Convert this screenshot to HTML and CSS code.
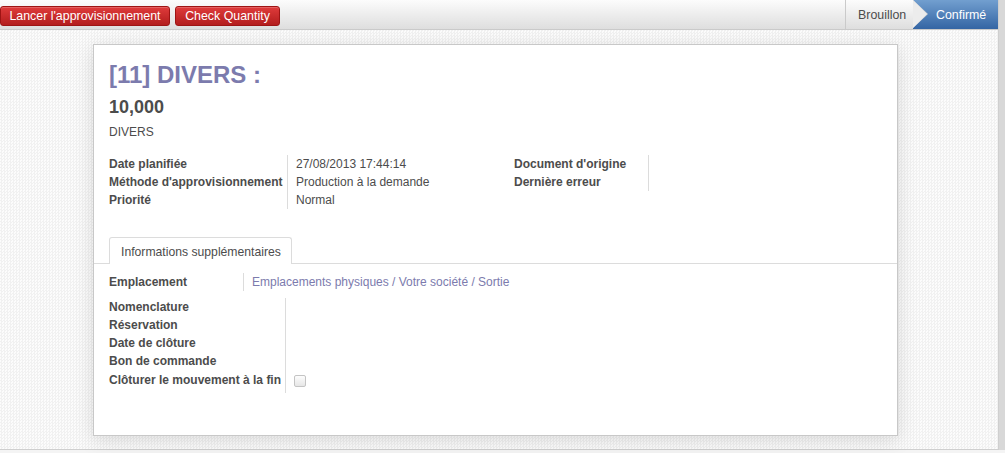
FILE: index.html
```html
<!DOCTYPE html>
<html lang="fr">
<head>
<meta charset="utf-8">
<title>Approvisionnement</title>
<link rel="stylesheet" href="styles.css">
</head>
<body>
<div class="app">
  <div class="main">
    <header class="topbar">
      <div class="actions">
        <button class="btn">Lancer l'approvisionnement</button>
        <button class="btn">Check Quantity</button>
      </div>
      <div class="statusbar">
        <span class="step step-prev">Brouillon</span>
        <span class="step step-current">Confirmé</span>
      </div>
    </header>
    <div class="content">
      <div class="sheet">
        <h1 class="title">[11] DIVERS :</h1>
        <h2 class="qty">10,000</h2>
        <div class="product">DIVERS</div>

        <div class="groups">
          <div class="group group-a">
            <div class="labels">
              <div class="row lbl">Date planifiée</div>
              <div class="row lbl">Méthode d'approvisionnement</div>
              <div class="row lbl">Priorité</div>
            </div>
            <div class="values">
              <div class="row">27/08/2013 17:44:14</div>
              <div class="row">Production à la demande</div>
              <div class="row">Normal</div>
            </div>
          </div>
          <div class="group group-b">
            <div class="labels">
              <div class="row lbl">Document d'origine</div>
              <div class="row lbl">Dernière erreur</div>
            </div>
            <div class="values values-empty">
              <div class="row"></div>
              <div class="row"></div>
            </div>
          </div>
        </div>

        <nav class="tabs">
          <span class="tab">Informations supplémentaires</span>
        </nav>

        <div class="group group-c">
          <div class="labels">
            <div class="row lbl">Emplacement</div>
          </div>
          <div class="values">
            <div class="row link">Emplacements physiques / Votre société / Sortie</div>
          </div>
        </div>

        <div class="group group-d">
          <div class="labels">
            <div class="row lbl">Nomenclature</div>
            <div class="row lbl">Réservation</div>
            <div class="row lbl">Date de clôture</div>
            <div class="row lbl">Bon de commande</div>
            <div class="row row-tall lbl">Clôturer le mouvement à la fin</div>
          </div>
          <div class="values">
            <div class="row"></div>
            <div class="row"></div>
            <div class="row"></div>
            <div class="row"></div>
            <div class="row row-tall"><span class="checkbox"></span></div>
          </div>
        </div>
      </div>
    </div>
  </div>
  <div class="edge"></div>
</div>
</body>
</html>
```

FILE: styles.css
```css
* { box-sizing: border-box; }

html, body {
  margin: 0;
  padding: 0;
}

body {
  font-family: "Liberation Sans", Arial, sans-serif;
  font-size: 12px;
  color: #4c4c4c;
  background: #f4f4f4;
  width: 1005px;
  height: 453px;
  overflow: hidden;
}

.app {
  display: flex;
  height: 450px;
}

.main {
  flex: 1;
  display: flex;
  flex-direction: column;
  min-width: 0;
}

.edge {
  width: 7px;
  background: #d8d8d8;
  border-left: 1px solid #cfcfcf;
}

/* top bar */
.topbar {
  height: 30px;
  display: flex;
  justify-content: space-between;
  background: linear-gradient(#fcfcfc, #dedede);
  border-bottom: 1px solid #cacaca;
}

.actions {
  display: flex;
  gap: 5px;
  padding-top: 6px;
}

.btn {
  height: 20px;
  padding: 0 7px;
  margin: 0;
  font-family: "Liberation Sans", Arial, sans-serif;
  font-size: 12.4px;
  color: #fff;
  background: linear-gradient(#df3b3b, #b31d1d);
  border: 1px solid #9e1414;
  border-radius: 3px;
  box-shadow: inset 0 1px 0 rgba(255,255,255,0.2);
  line-height: 17px;
  cursor: pointer;
}
.actions .btn:first-child { width: 170px; }
.actions .btn:last-child { width: 105px; }

.statusbar {
  display: flex;
  height: 29px;
}

.step {
  display: flex;
  align-items: center;
  height: 29px;
  font-size: 12.4px;
}

.step-prev {
  position: relative;
  padding: 0 8px 0 12px;
  width: 68px;
  color: #4c4c4c;
  background: linear-gradient(#fcfcfc, #dedede);
  border-left: 1px solid #cacaca;
  z-index: 1;
}
.step-prev::before,
.step-prev::after {
  content: "";
  position: absolute;
  top: 0;
  width: 0;
  height: 0;
  border-top: 14.5px solid transparent;
  border-bottom: 14.5px solid transparent;
}
.step-prev::before {
  right: -15px;
  border-left: 15px solid #d0d0d0;
}
.step-prev::after {
  right: -14px;
  border-left: 14px solid #ececec;
}

.step-current {
  padding: 0 13px 0 23px;
  width: 85px;
  color: #fff;
  background: linear-gradient(#729fcf, #3465a4);
}

/* content */
.content {
  flex: 1;
  padding: 14px 0 0 93px;
  background-color: #f8f8f8;
  background-image: repeating-conic-gradient(#f1f1f1 0 25%, #fcfcfc 0 50%);
  background-size: 3px 3px;
  border-bottom: 1px solid #cfcfcf;
}

.sheet {
  width: 805px;
  height: 392px;
  background: #fff;
  border: 1px solid #c8c8c8;
  box-shadow: 0 4px 18px rgba(0,0,0,0.13);
  padding: 16px 15px 0 15px;
}

.title {
  margin: 0;
  font-size: 24px;
  line-height: 28px;
  font-weight: bold;
  color: #7c7bad;
}

.qty {
  margin: 7px 0 0;
  font-size: 18px;
  line-height: 22px;
  font-weight: bold;
  color: #4c4c4c;
}

.product {
  margin-top: 5px;
  line-height: 18px;
  font-size: 12px;
}

/* field groups */
.groups {
  display: flex;
  margin-top: 14px;
}

.group {
  display: flex;
  align-items: flex-start;
}

.row {
  height: 18px;
  line-height: 18px;
  white-space: nowrap;
}

.lbl {
  font-weight: bold;
}

.values {
  border-left: 1px solid #dcdcdc;
  padding-left: 8px;
}

.group-a { width: 405px; }
.group-a .labels { width: 178px; }
.group-a .values { width: 227px; }

.group-b .labels { width: 134px; }
.group-b .values { width: 20px; }

.tabs {
  margin: 27px -15px 0;
  padding-left: 15px;
  border-bottom: 1px solid #dcdcdc;
  display: flex;
}

.tab {
  display: block;
  height: 27px;
  padding: 0 10px 0 11px;
  line-height: 28px;
  border: 1px solid #dcdcdc;
  border-bottom: none;
  border-radius: 3px 3px 0 0;
  background: #fff;
  color: #4c4c4c;
  position: relative;
  top: 1px;
  font-size: 12.2px;
}

.group-c { margin-top: 9px; }
.group-c .labels { width: 134px; }
.link { color: #7c7bad; }

.group-d { margin-top: 7px; }
.group-d .labels { width: 176px; }
.group-d .values { width: 30px; }

.row-tall {
  height: 23px;
  line-height: 20px;
}

.checkbox {
  display: inline-block;
  width: 12px;
  height: 12px;
  margin-top: 5px;
  border: 1px solid #c4c4c4;
  border-radius: 2px;
  background: linear-gradient(#fdfdfd, #e6e6e6);
  vertical-align: top;
}
```
